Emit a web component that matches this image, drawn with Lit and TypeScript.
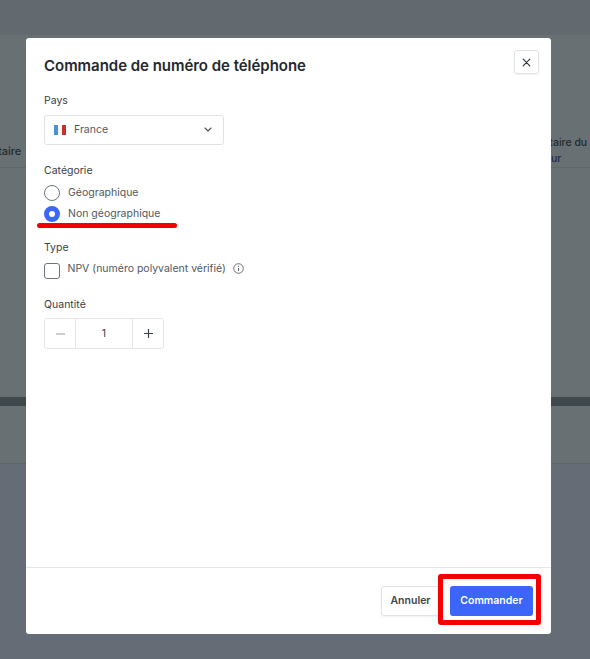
import { LitElement, html, css } from "lit";
import { customElement } from "lit/decorators.js";

@customElement("app-root")
export class AppRoot extends LitElement {
  static styles = css`
    :host { display: block; position: relative; width: 590px; height: 659px; overflow: hidden; font-family: Inter, "Liberation Sans", sans-serif; color: #3a4048; background: #687073; }
    * { box-sizing: border-box; }
    .page { height: 659px; display: flex; flex-direction: column; }
    .top { height: 35px; background: #626a70; flex: none; }
    .upper { height: 362px; flex: none; background: #687073; }
    .thead { height: 133px; border-bottom: 1px solid #5f676a; display: flex; justify-content: space-between; font-size: 11px; font-weight: 500; color: #24292e; }
    .c1 { margin-top: 109px; margin-left: -2px; }
    .c2 { margin-top: 100px; width: 39px; flex: none; line-height: 16px; white-space: nowrap; font-size: 10.5px; }
    .c2 span { display: block; }
    .c2 .l1 { margin-left: -8px; }
    .c2 .u { color: #1e2a4a; }
    .band { height: 9px; flex: none; background: #3f494d; }
    .mid { height: 58px; flex: none; border-bottom: 1px solid #5d6568; }
    .low { flex: 1; background: #656c75; }

    .modal { position: absolute; left: 26px; top: 38px; width: 525px; height: 596px; background: #fff; border-radius: 3px; display: flex; flex-direction: column; }
    .head { height: 55px; padding: 18px 12px 0 18px; display: flex; justify-content: space-between; align-items: flex-start; }
    h2 { margin: 0; font-size: 15px; line-height: 19px; font-weight: 600; color: #23282f; letter-spacing: -0.002em; }
    .close { width: 25px; height: 24px; margin-top: -6px; border: 1px solid #dfe2e6; border-radius: 3px; display: flex; align-items: center; justify-content: center; box-shadow: 0 1px 2px rgba(0,0,0,.06); }
    .body { flex: 1; padding: 0 18px; display: flex; flex-direction: column; }
    .label { font-size: 10.5px; line-height: 16px; color: #3a4048; font-weight: 400; }
    .select { margin-top: 6px; width: 180px; height: 30px; border: 1px solid #dfe2e6; border-radius: 3px; display: flex; align-items: center; padding: 0 11px 1px 9px; font-size: 10.5px; color: #51575f; }
    .flag { width: 12px; height: 10px; display: flex; margin-right: 8px; }
    .flag i { flex: 1; }
    .flag .b { background: #4a90d6; }
    .flag .w { background: #f6f6f6; }
    .flag .r { background: #c8302c; }
    .name { flex: 1; }
    .sec-cat { margin-top: 18px; }
    .opt { display: flex; align-items: center; gap: 8px; height: 21px; font-size: 10.5px; color: #51575f; }
    .opts { margin-top: 3px; }
    .radio { width: 16px; height: 16px; border-radius: 50%; border: 1px solid #6a7480; flex: none; }
    .radio.on { border: 5px solid #3c66f5; background: #fff; }
    .sec-type { margin-top: 16px; }
    .check { width: 16px; height: 16px; border-radius: 3px; border: 1px solid #6a7480; flex: none; margin-top: 4px; }
    .checkrow { margin-top: 2px; gap: 7.5px; }
    .info { display: block; margin-bottom: 1px; }
    .sec-q { margin-top: 18px; }
    .stepper { margin-top: 5px; width: 120px; height: 31px; border: 1px solid #e3e5e8; border-radius: 3px; display: flex; font-size: 10.5px; color: #3a4048; }
    .stepper > div { display: flex; align-items: center; justify-content: center; }
    .btn-s { width: 30px; flex: none; }
    .val { width: 58px; border-left: 1px solid #e3e5e8; border-right: 1px solid #e3e5e8; flex: none; }
    .foot { height: 67px; border-top: 1px solid #e3e5e8; display: flex; justify-content: flex-end; align-items: flex-start; padding: 18px 18px 0 0; gap: 10px; }
    .btn { height: 30px; display: flex; align-items: center; justify-content: center; border-radius: 3px; font-size: 10.5px; font-weight: 600; padding-bottom: 1px; }
    .cancel { width: 59px; border: 1px solid #dfe2e6; color: #3f454d; box-shadow: 0 1px 2px rgba(0,0,0,.06); }
    .ok { width: 83px; background: #3c66fa; color: #fff; }

    .mark-line { position: absolute; left: 37px; top: 223px; width: 140px; height: 5px; background: #f50000; border-radius: 3px; }
    .mark-box { position: absolute; left: 438px; top: 574px; width: 103px; height: 51px; border: 5px solid #f50000; border-radius: 3px; }
  `;

  render() {
    return html`
      <div class="page">
        <div class="top"></div>
        <div class="upper">
          <div class="thead">
            <span class="c1">taire</span>
            <div class="c2"><span class="l1">ntaire du</span><span class="u">ur</span></div>
          </div>
        </div>
        <div class="band"></div>
        <div class="mid"></div>
        <div class="low"></div>
      </div>

      <div class="modal">
        <div class="head">
          <h2>Commande de numéro de téléphone</h2>
          <div class="close">
            <svg width="9" height="9" viewBox="0 0 9 9"><path d="M1.200 1.200l6.600 6.600M7.800 1.200l-6.600 6.600" stroke="#2f353c" stroke-width="1.200" stroke-linecap="round"/></svg>
          </div>
        </div>
        <div class="body">
          <div class="label">Pays</div>
          <div class="select">
            <span class="flag"><i class="b"></i><i class="w"></i><i class="r"></i></span>
            <span class="name">France</span>
            <svg width="8" height="5" viewBox="0 0 8 5"><path d="M1 1l3 3 3-3" fill="none" stroke="#51575f" stroke-width="1.100" stroke-linecap="round" stroke-linejoin="round"/></svg>
          </div>
          <div class="label sec-cat">Catégorie</div>
          <div class="opts">
            <div class="opt"><span class="radio"></span>Géographique</div>
            <div class="opt"><span class="radio on"></span>Non géographique</div>
          </div>
          <div class="label sec-type">Type</div>
          <div class="opt checkrow"><span class="check"></span>NPV (numéro polyvalent vérifié)
            <svg class="info" width="11" height="11" viewBox="0 0 11 11"><circle cx="5.500" cy="5.500" r="4.800" fill="none" stroke="#6b727a" stroke-width="1"/><path d="M5.500 5v3" stroke="#6b727a" stroke-width="1.100"/><circle cx="5.500" cy="3.200" r=".7" fill="#6b727a"/></svg>
          </div>
          <div class="label sec-q">Quantité</div>
          <div class="stepper">
            <div class="btn-s"><svg width="9" height="2" viewBox="0 0 9 2"><path d="M0 1h9" stroke="#a9aeb4" stroke-width="1.200"/></svg></div>
            <div class="val">1</div>
            <div class="btn-s"><svg width="9" height="9" viewBox="0 0 9 9"><path d="M0 4.500h9M4.500 0v9" stroke="#3a4048" stroke-width="1.200"/></svg></div>
          </div>
        </div>
        <div class="foot">
          <div class="btn cancel">Annuler</div>
          <div class="btn ok">Commander</div>
        </div>
      </div>

      <div class="mark-line"></div>
      <div class="mark-box"></div>
    `;
  }
}
